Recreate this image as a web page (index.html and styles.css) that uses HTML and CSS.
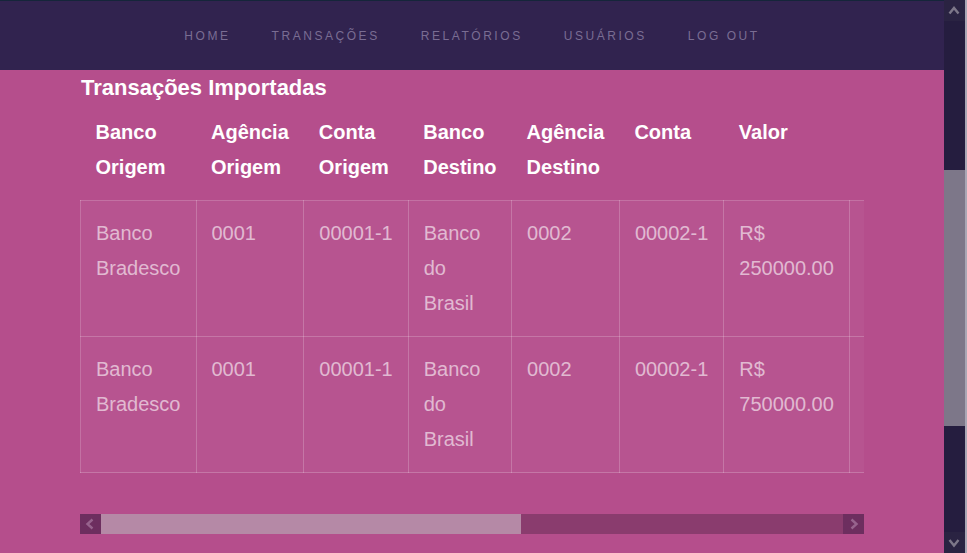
FILE: index.html
```html
<!DOCTYPE html>
<html lang="pt-BR">
<head>
<meta charset="utf-8">
<title>Transações Importadas</title>
<link rel="stylesheet" href="styles.css">
</head>
<body>
<div class="app">
  <nav class="topnav">
    <a class="navlink" href="#">Home</a>
    <a class="navlink" href="#">Transações</a>
    <a class="navlink" href="#">Relatórios</a>
    <a class="navlink" href="#">Usuários</a>
    <a class="navlink" href="#">Log out</a>
  </nav>
  <main class="content">
    <h2 class="section-title">Transações Importadas</h2>
    <div class="table-wrap">
      <table class="tx-table">
        <thead>
          <tr>
            <th>Banco Origem</th>
            <th>Agência Origem</th>
            <th>Conta Origem</th>
            <th>Banco Destino</th>
            <th>Agência Destino</th>
            <th>Conta</th>
            <th>Valor</th>
            <th>Data Transação</th>
            <th>Data Importação</th>
            <th>Importado Por</th>
            <th>Suspeita</th>
          </tr>
        </thead>
        <tbody>
          <tr>
            <td>Banco Bradesco</td>
            <td>0001</td>
            <td class="nowrap">00001-1</td>
            <td>Banco do Brasil</td>
            <td>0002</td>
            <td class="nowrap">00002-1</td>
            <td>R$ 250000.00</td>
            <td>01/01/2022</td>
            <td>05/01/2022</td>
            <td>Admin</td>
            <td>Sim</td>
          </tr>
          <tr>
            <td>Banco Bradesco</td>
            <td>0001</td>
            <td class="nowrap">00001-1</td>
            <td>Banco do Brasil</td>
            <td>0002</td>
            <td class="nowrap">00002-1</td>
            <td>R$ 750000.00</td>
            <td>01/01/2022</td>
            <td>05/01/2022</td>
            <td>Admin</td>
            <td>Sim</td>
          </tr>
        </tbody>
      </table>
    </div>
    <div class="hscroll">
      <div class="hbtn">
        <svg width="21" height="20" viewBox="0 0 21 20"><path d="M12.5 5.5 L7.5 10 L12.5 14.5" fill="none" stroke="#97638d" stroke-width="2.4"/></svg>
      </div>
      <div class="hthumb"></div>
      <div class="htrack"></div>
      <div class="hbtn">
        <svg width="21" height="20" viewBox="0 0 21 20"><path d="M8.5 5.5 L13.5 10 L8.5 14.5" fill="none" stroke="#97638d" stroke-width="2.4"/></svg>
      </div>
    </div>
  </main>
</div>
<div class="vscroll">
  <div class="vbtn">
    <svg width="21" height="21" viewBox="0 0 21 21"><path d="M5.5 13.5 L10 8 L14.5 13.5" fill="none" stroke="#7d7789" stroke-width="2.4"/></svg>
  </div>
  <div class="vtrack">
    <div class="vthumb"></div>
  </div>
  <div class="vbtn">
    <svg width="21" height="21" viewBox="0 0 21 21"><path d="M5.5 8 L10 13.5 L14.5 8" fill="none" stroke="#7d7789" stroke-width="2.4"/></svg>
  </div>
</div>
</body>
</html>
```
FILE: styles.css
```css
body {
  margin: 0;
  height: 100vh;
  overflow: hidden;
  display: flex;
  font-family: "Liberation Sans", Arial, sans-serif;
  color: #ffffff;
  background: #b54e8c;
}

.app {
  flex: 1;
  min-width: 0;
  display: flex;
  flex-direction: column;
}

.topnav {
  flex: none;
  height: 70px;
  box-sizing: border-box;
  border-top: 1px solid #15253a;
  background: #31234f;
  display: flex;
  justify-content: center;
  align-items: center;
  gap: 41px;
}
.navlink {
  color: #7a6d93;
  text-decoration: none;
  text-transform: uppercase;
  font-size: 12px;
  letter-spacing: 2.55px;
  line-height: 14px;
}

.content {
  flex: 1;
  min-height: 0;
  overflow: hidden;
  padding: 5px 80px 0;
}

.section-title {
  margin: 0;
  padding-left: 1px;
  font-size: 22px;
  line-height: 25px;
  font-weight: bold;
}

.table-wrap {
  overflow: hidden;
}

.tx-table {
  width: 100%;
  border-collapse: collapse;
  font-size: 20px;
  line-height: 35px;
}
.tx-table th {
  padding: 15px;
  text-align: left;
  vertical-align: top;
  font-weight: bold;
  color: #ffffff;
}
.tx-table td {
  padding: 15px;
  vertical-align: top;
  border: 1px solid rgba(255, 255, 255, 0.2);
  color: rgba(255, 255, 255, 0.6);
}
.tx-table td.nowrap {
  white-space: nowrap;
}
.tx-table tbody tr {
  background: rgba(255, 255, 255, 0.04);
}

.hscroll {
  margin-top: 41px;
  height: 20px;
  display: flex;
}
.hbtn {
  flex: none;
  width: 21px;
  height: 20px;
  background: #6d2e5f;
}
.hbtn svg {
  display: block;
}
.hthumb {
  flex: none;
  width: 420px;
  background: #b589a6;
}
.htrack {
  flex: 1;
  background: #8a3c6e;
}

.vscroll {
  flex: none;
  width: 21px;
  height: 100vh;
  display: flex;
  flex-direction: column;
  background: #251d3f;
  border-right: 2px solid #a9a7b5;
}
.vbtn {
  flex: none;
  height: 21px;
  background: #2a2342;
}
.vbtn svg {
  display: block;
}
.vtrack {
  flex: 1;
  padding-top: 149px;
}
.vthumb {
  height: 256px;
  background: #7d7789;
}
```
